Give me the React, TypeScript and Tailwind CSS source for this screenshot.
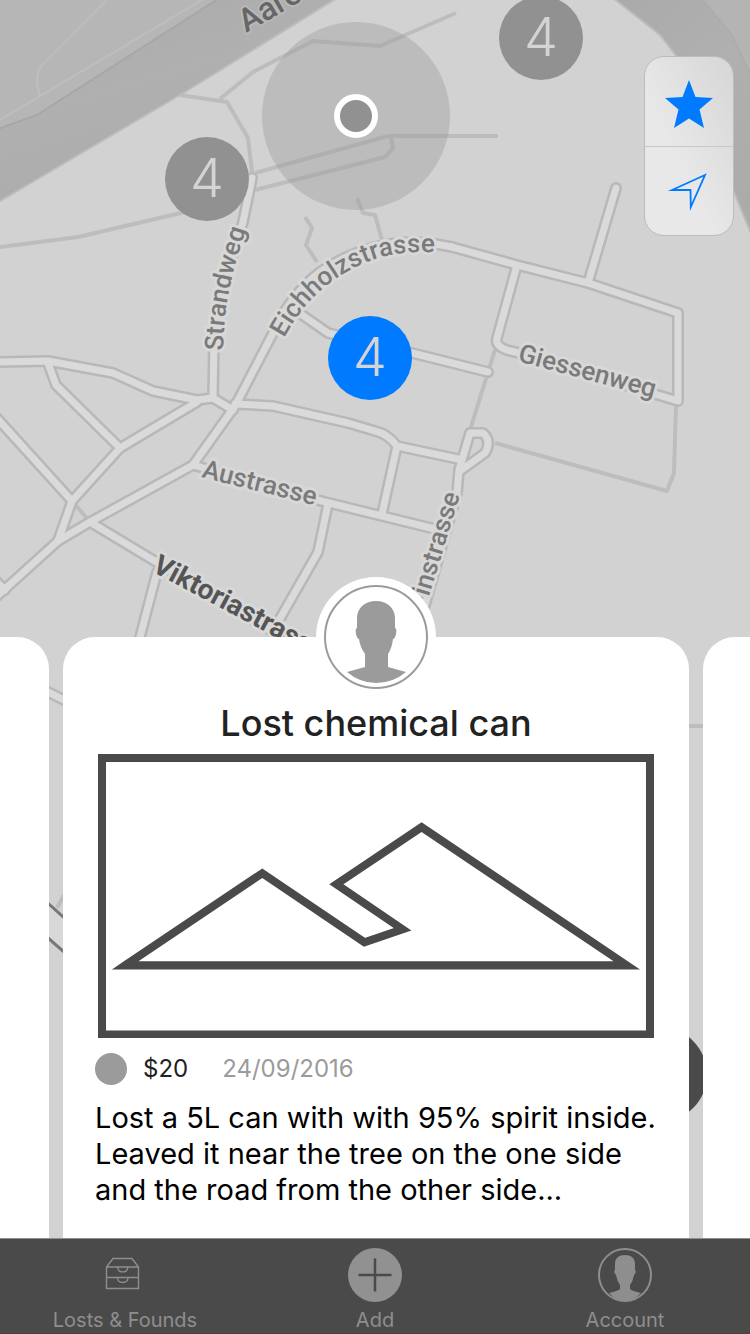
import React from "react";

const roads = [
  "M-5 362 L48 361 L113 373 L153 391 L197 400 L213 398 L233 410",
  "M252 178 L243 222 L222 290 L214 340 L213 398",
  "M452 247 L430 243 Q370 238 320 272 Q290 295 272 335 L235 406 L193 465 L90 522 L58 541 L-5 598",
  "M452 247 L517 265 L588 283 L678 313 L678 401 L658 395 L515 352 Q494 348 497 338 L517 265",
  "M588 283 L616 188",
  "M235 404 L273 406 L348 423 L375 431 Q388 434 397 446 L458 459",
  "M397 446 L382 514",
  "M193 465 L325 502 L435 529",
  "M328 504 L318 552 L278 622",
  "M425 605 L457 493 L459 470 L470 433 L483 433 Q492 441 485 453 L460 471",
  "M295 310 L328 333 L412 353 L488 372",
  "M-5 416 L72 501 L58 541",
  "M48 363 L56 385 L120 448",
  "M72 501 L120 448 L197 402",
  "M90 522 L153 560 L320 660",
  "M157 572 L138 645",
  "M-10 575 L5 590",
  "M40 688 L70 703",
];

const paths = [
  "M0 247 L78 237 L185 212",
  "M180 95 L227 102 L248 138 L252 172",
  "M220 99 L253 72 L313 41 L380 46 L456 13",
  "M255 173 L388 136 L498 136",
  "M255 190 L385 157 L393 148 L391 137",
  "M305 217 L312 228 L306 245 L317 262",
  "M357 198 L363 213 L375 215 L382 240",
  "M495 350 L470 430",
  "M495 443 L667 491 L674 473 L676 405",
  "M72 501 L90 522",
  "M680 726 L710 726",
  "M64 895 L57 908",
];

function MapCanvas() {
  return (
    <svg
      viewBox="0 0 750 1240"
      preserveAspectRatio="xMidYMin slice"
      className="absolute inset-0 h-full w-full"
      aria-label="Map"
      role="img"
    >
      <defs>
        <linearGradient id="river" x1="0" y1="0" x2="0.5" y2="1">
          <stop offset="0" stopColor="#a9a9a9" />
          <stop offset="0.5" stopColor="#b0b0b0" />
          <stop offset="1" stopColor="#ababab" />
        </linearGradient>
        <path id="strandweg" d="M223 351 C225 300 229 280 253 208" />
        <path id="eichholz" d="M284 338 C302 304 328 280 358 266 S410 251 445 253" />
      </defs>
      <rect width="750" height="1240" fill="#d2d2d2" />
      <path d="M0 0 H215 L37 115 L0 128 Z" fill="#b6b6b6" />
      <path d="M-10 132 L37 115 L232 -10 H350 L180 95 L-10 207 Z" fill="url(#river)" stroke="#bcbcbc" strokeWidth="2" />
      <path d="M-10 132 L37 115 L232 -10" fill="none" stroke="#a6a6a6" strokeWidth="2" />
      <path d="M0 120 L202 0 M107 0 L40 67 Q34 80 40 95" fill="none" stroke="#bebebe" strokeWidth="2" />
      <path d="M603 -10 L660 35 L677 57 L733 190 L760 255 V-10 Z" fill="url(#river)" stroke="#bcbcbc" strokeWidth="2" />
      <path d="M695 -10 L732 35 L760 94 V-10 Z" fill="#b4b4b4" stroke="#a8a8a8" strokeWidth="1" />

      <g fill="none" stroke="#bdbdbd" strokeWidth="4" strokeLinejoin="round">
        {paths.map((d) => <path key={d} d={d} />)}
      </g>
      <g fill="none" stroke="#b8b8b8" strokeWidth="12" strokeLinejoin="round" strokeLinecap="round">
        {roads.map((d) => <path key={d} d={d} />)}
      </g>
      <g fill="none" stroke="#dadada" strokeWidth="7" strokeLinejoin="round" strokeLinecap="round">
        {roads.map((d) => <path key={d} d={d} />)}
      </g>
      <path d="M40 896 L72 925 V959 L40 931 Z" fill="#d8d8d8" stroke="#777777" strokeWidth="3" />

      <g
        className="font-['Roboto',sans-serif] text-[26px] font-medium"
        fill="#7a7a7a"
        stroke="#d8d8d8"
        strokeWidth="6"
        strokeLinejoin="round"
        paintOrder="stroke"
      >
        <text><textPath href="#strandweg">Strandweg</textPath></text>
        <text><textPath href="#eichholz">Eichholzstrasse</textPath></text>
        <text transform="translate(517 361) rotate(15)">Giessenweg</text>
        <text transform="translate(201 477) rotate(14)">Austrasse</text>
        <text transform="translate(460 495) rotate(-73)" textAnchor="end">instrasse</text>
        <text transform="translate(246 33) rotate(-30)" className="text-[32px]" fill="#666666" stroke="#b8b8b8" strokeWidth="4">Aare</text>
        <text transform="translate(151 571) rotate(28)" className="text-[28px] font-bold" fill="#555555">Viktoriastrasse</text>
      </g>
    </svg>
  );
}

const markers = [
  { id: "north", place: "left-[499px] -top-[4px] bg-[#919191]" },
  { id: "west", place: "left-[165px] top-[137px] bg-[#919191]" },
  { id: "centre", place: "left-[328px] top-[316px] bg-[#007aff]" },
];

function PersonShape() {
  return (
    <path d="M52 16 C41 16 33 23 33 33 V43 Q31 43 32 49 Q33 54 35 54 Q36 62 41 69 V82 L23 87 Q36 98 52 98 Q69 98 82 87 L64 82 V69 Q68 63 69 54 Q71 54 72 49 Q73 43 71 43 V33 C71 23 63 16 52 16 Z" />
  );
}

function ItemCard() {
  return (
    <article className="flex flex-col rounded-t-[32px] bg-white px-[35px] pb-[30px] font-['Inter',sans-serif]">
      <div className="-mt-[60px] flex size-[120px] items-center justify-center self-center rounded-full bg-white">
        <svg viewBox="0 0 104 104" className="size-[104px]" fill="#9b9b9b" role="img" aria-label="Owner">
          <circle cx="52" cy="52" r="51" fill="none" stroke="#9b9b9b" strokeWidth="2" />
          <PersonShape />
        </svg>
      </div>
      <h2 className="mt-1 text-center text-[36px] leading-[44px] font-medium text-[#222222]">Lost chemical can</h2>
      <svg viewBox="0 0 555 284" className="mt-[9px] w-full" fill="none" stroke="#4a4a4a" strokeWidth="8" role="img" aria-label="Item photo">
        <rect x="4" y="4" width="547" height="276" />
        <path d="M27 211 L164 119 L266 188 L304 175 L238 130 L323 73 L528 211 Z" />
      </svg>
      <div className="-ml-[3px] mt-[15px] flex h-8 items-center">
        <span className="size-8 rounded-full bg-[#9b9b9b]" />
        <span className="ml-4 text-[24px] text-[#222222]">$20</span>
        <time dateTime="2016-09-24" className="ml-[34px] text-[24px] text-[#9b9b9b]">24/09/2016</time>
      </div>
      <p className="-mr-4 -ml-[3px] mt-[15px] text-[29px] leading-[36px] text-black">
        Lost a 5L can with with 95% spirit inside.
        <br />
        Leaved it near the tree on the one side
        <br />
        and the road from the other side...
      </p>
    </article>
  );
}

function TabBar() {
  const tab = "flex flex-col items-center pt-2 text-[20px] leading-6 text-[#8e8e8e]";
  const icon = "mb-[5px] size-[56px]";
  return (
    <nav className="relative grid h-24 grid-cols-3 border-t border-b border-t-[#8e8e8e] border-b-[#4d4044] bg-[#4a4a4a] font-['Inter',sans-serif]">
      <a href="#items" className={tab}>
        <svg viewBox="0 0 56 56" className={icon} fill="none" stroke="#8e8e8e" strokeWidth="1.4">
          <path d="M9.500 20 L16 11.500 H35 L41.500 20 V41.500 H9.500 Z M9.500 20 H41.500 M9.500 30.500 H41.500 M20.500 20 C21 26.500 30.500 26.500 31 20 M20.500 31 C21 37 30.500 37 31 31" />
        </svg>
        Losts &amp; Founds
      </a>
      <a href="#add" className={tab}>
        <svg viewBox="0 0 56 56" className={icon}>
          <circle cx="28" cy="28" r="27" fill="#919191" />
          <path d="M28 11.500 V44.500 M11.500 28 H44.500" stroke="#4a4a4a" strokeWidth="2.500" />
        </svg>
        Add
      </a>
      <a href="#account" className={tab}>
        <svg viewBox="0 0 56 56" className={icon} fill="#8e8e8e">
          <circle cx="28" cy="28" r="26" fill="none" stroke="#8e8e8e" strokeWidth="2" />
          <path d="M28 8 C22 8 18 11 18 17 V23 Q17 23 17.500 26 L19 28 Q20 34 23 38 V42 Q21 44 12 46 Q19 54 28 54 Q37 54 44 46 Q35 44 33 42 V38 Q36 34 37 28 L38.500 26 Q39 23 38 23 V17 C38 11 34 8 28 8 Z" />
        </svg>
        Account
      </a>
    </nav>
  );
}

export default function App() {
  return (
    <div className="flex min-h-screen flex-col">
      <main className="relative flex flex-1 flex-col justify-end overflow-hidden">
        <MapCanvas />
        <div className="absolute left-[262px] top-[22px] flex size-[188px] items-center justify-center rounded-full bg-[#9b9b9b]/40">
          <span className="size-11 rounded-full border-6 border-white bg-[#919191]" />
        </div>
        {markers.map((m) => (
          <button
            key={m.id}
            type="button"
            className={`absolute flex size-[84px] items-center justify-center rounded-full pb-1 font-['Inter',sans-serif] text-[54px] font-light text-[#d4d4d4] ${m.place}`}
          >
            4
          </button>
        ))}
        <div className="absolute right-4 top-14 flex w-[90px] flex-col divide-y divide-[#c8c8c8] rounded-[20px] border border-[#bcbcbc] bg-linear-to-bl from-[#d6d6d6] to-[#e8e8e8] to-60%">
          <button type="button" aria-label="Favourites" className="flex h-[90px] items-center justify-center pt-1">
            <svg viewBox="0 0 48 48" className="size-12" fill="#007aff">
              <path d="M24 0 L30.500 17 L48 18 L34.500 29.500 L39 48 L24 38.500 L9 48 L13.500 29.500 L0 18 L17.500 17 Z" />
            </svg>
          </button>
          <button type="button" aria-label="My location" className="flex h-[88px] items-center justify-center">
            <svg viewBox="0 0 40 40" className="size-10 overflow-visible" fill="none" stroke="#007aff" strokeWidth="1.800" strokeMiterlimit="10">
              <path d="M36 4 L3 19 H21.500 L21.800 36 Z" />
            </svg>
          </button>
        </div>
        <button type="button" aria-label="More" className="absolute bottom-[116px] right-[43px] size-[95px] rounded-full bg-[#4a4a4a]" />
        <section className="relative grid grid-cols-[49px_1fr_47px] gap-[14px]">
          <div className="rounded-tr-[32px] bg-white" />
          <ItemCard />
          <div className="rounded-tl-[32px] bg-white" />
        </section>
      </main>
      <TabBar />
    </div>
  );
}
